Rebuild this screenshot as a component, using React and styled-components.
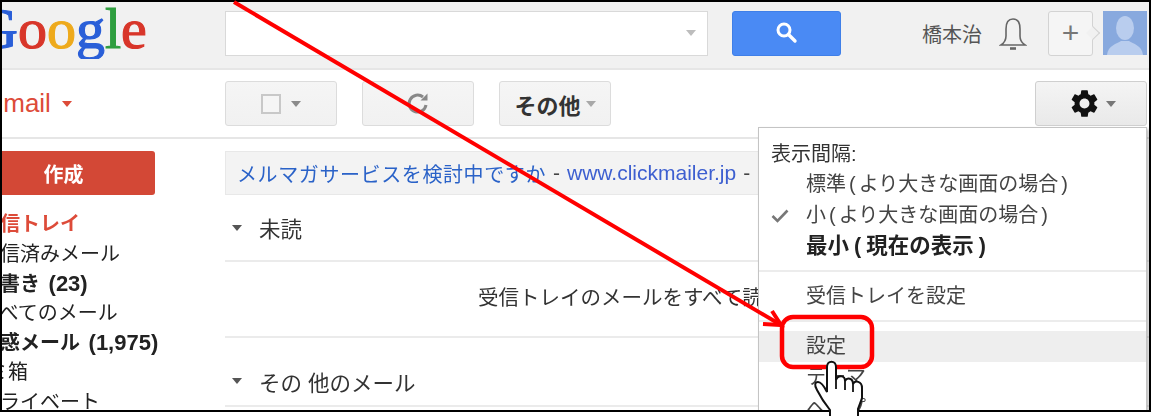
import styled, { createGlobalStyle } from "styled-components";
import { MdSettings } from "react-icons/md";

const GlobalStyle = createGlobalStyle`
  html, body {
    margin: 0;
    padding: 0;
    background: #fff;
  }
`;

const App = () => {
  return (
    <Stage>
      <GlobalStyle />
      <Frame>
        <Content>
          <TopBar>
            <LogoCell>
              <Logo>
                <LogoLetter color="#2a5fd8">G</LogoLetter>
                <LogoLetter color="#d8362a">o</LogoLetter>
                <LogoLetter color="#eeaa1c">o</LogoLetter>
                <LogoLetter color="#2a5fd8">g</LogoLetter>
                <LogoLetter color="#2f9e3f">l</LogoLetter>
                <LogoLetter color="#d8362a">e</LogoLetter>
              </Logo>
            </LogoCell>
            <SearchBox>
              <Caret color="#bdbdbd" />
            </SearchBox>
            <SearchButton>
              <svg width="26" height="26" viewBox="0 0 26 26" fill="none" stroke="#fff">
                <circle cx="10" cy="10" r="6" strokeWidth="3" />
                <path d="M14.5 14.5 L21 21" strokeWidth="3.4" strokeLinecap="round" />
              </svg>
            </SearchButton>
            <UserName>橋本治</UserName>
            <BellIcon viewBox="0 0 28 36" fill="none" stroke="#666" strokeWidth="1.6">
              <path d="M14 3 C8 3 7 8 7 13 V20 C7 24 5 27 2 29 H26 C23 27 21 24 21 20 V13 C21 8 20 3 14 3 Z" />
              <path d="M11 32.5 H17" strokeWidth="2.6" />
            </BellIcon>
            <PlusButton>+</PlusButton>
            <Avatar>
              <svg width="44" height="44" viewBox="0 0 44 44">
                <ellipse cx="22" cy="17" rx="9" ry="12" fill="#b9cdee" />
                <path d="M4 44 C5 34 14 33 18 30 H26 C30 33 39 34 40 44 Z" fill="#b9cdee" />
              </svg>
            </Avatar>
          </TopBar>

          <ToolRow>
            <GmailCell>
              <GmailLabel>Gmail</GmailLabel>
              <Caret color="#dd4b39" />
            </GmailCell>
            <ToolGroup>
              <ToolButton>
                <CheckBox />
                <Caret color="#8a8a8a" />
              </ToolButton>
              <ToolButton>
                <svg width="28" height="28" viewBox="0 0 28 28" fill="none" stroke="#888" strokeWidth="3">
                  <path d="M22 15 A8.5 8.5 0 1 1 19 7" />
                  <path d="M16.5 10.5 H23.5 V3.5 Z" fill="#888" stroke="none" />
                </svg>
              </ToolButton>
              <ToolButton bold>
                その他
                <Caret color="#a8a8a8" />
              </ToolButton>
            </ToolGroup>
            <GearButton>
              <MdSettings size={33} color="#111" />
              <Caret color="#777" />
            </GearButton>
          </ToolRow>

          <Body>
            <Sidebar>
              <ComposeButton>作成</ComposeButton>
              <NavList>
                <NavItem active>受信トレイ</NavItem>
                <NavItem>送信済みメール</NavItem>
                <NavItem bold>下書き <Count>(23)</Count></NavItem>
                <NavItem>すべてのメール</NavItem>
                <NavItem bold>迷惑メール <Count>(1,975)</Count></NavItem>
                <NavItem shift={12}>ゴミ箱</NavItem>
                <NavItem>プライベート</NavItem>
              </NavList>
            </Sidebar>
            <Main>
              <Banner>
                <BannerLink>メルマガサービスを検討中ですか</BannerLink>
                <Sep>-</Sep>
                <BannerUrl>www.clickmailer.jp</BannerUrl>
                <Sep>-</Sep>
              </Banner>
              <SectionHead height={67}>
                <SectionCaret />
                未読
              </SectionHead>
              <EmptyRow>受信トレイのメールをすべて読みました</EmptyRow>
              <SectionHead height={69} pushed>
                <SectionCaret />
                その 他のメール
              </SectionHead>
            </Main>
          </Body>

          <Menu>
            <MenuHeading>表示間隔:</MenuHeading>
            <MenuItem>標準<Paren>(</Paren>より大きな画面の場合<Paren>)</Paren></MenuItem>
            <MenuItem>
              <Check viewBox="0 0 18 14" fill="none" stroke="#777" strokeWidth="2.6">
                <path d="M1.5 7 L6.5 12 L16.5 1.5" />
              </Check>
              小<Paren>(</Paren>より大きな画面の場合<Paren>)</Paren>
            </MenuItem>
            <MenuItem bold>最小<BoldParen>(</BoldParen>現在の表示<BoldParen>)</BoldParen></MenuItem>
            <MenuRule />
            <MenuItem>受信トレイを設定</MenuItem>
            <MenuRule />
            <MenuItem hover>設定</MenuItem>
            <MenuItem>テーマ</MenuItem>
            <MenuItem>ヘルプ</MenuItem>
          </Menu>
        </Content>
      </Frame>

      <Annotation viewBox="0 0 1153 416">
        <path d="M234 2 L781 325" stroke="#f00" strokeWidth="4" fill="none" />
        <path d="M772 311 L781 325 L763 324" stroke="#f00" strokeWidth="4" fill="none" />
        <rect x="782" y="317" width="90" height="50" rx="11" stroke="#f00" strokeWidth="4.5" fill="none" />
        <path
          d="M830 416 V410 C826 405 820 396 817 390 C814 385 815 382 818 382 C822 382 825 388 827 392 L827 367 C827 360 836 360 836 367 L836 380 C838 375 845 375 845 381 C847 377 853 378 853 384 C855 380 862 381 862 388 L862 398 L858 409 V416"
          fill="#fff"
          stroke="#111"
          strokeWidth="2"
        />
        <path d="M836 380 V389 M845 381 V390 M853 384 V392" stroke="#111" strokeWidth="1.8" fill="none" />
      </Annotation>
    </Stage>
  );
};

export default App;

const cjk = `"Liberation Sans", "Noto Sans CJK JP", sans-serif`;

const Stage = styled.div`
  position: relative;
  width: 1153px;
  height: 416px;
  overflow: hidden;
  background: #fff;
  font-family: ${cjk};
`;

const Frame = styled.div`
  width: 1151px;
  height: 412px;
  box-sizing: border-box;
  border: 2px solid #000;
  overflow: hidden;
`;

const Content = styled.div`
  position: relative;
  height: 100%;
  filter: blur(0.35px);
`;

const Annotation = styled.svg`
  position: absolute;
  top: 0;
  left: 0;
  width: 1153px;
  height: 416px;
  pointer-events: none;
`;

const Caret = styled.span`
  display: inline-block;
  width: 0;
  height: 0;
  border-left: 5px solid transparent;
  border-right: 5px solid transparent;
  border-top: 6px solid ${(props) => props.color};
`;

const TopBar = styled.div`
  height: 68px;
  box-sizing: border-box;
  display: flex;
  align-items: center;
  background: #f1f1f1;
  border-bottom: 2px solid #e6e6e6;
  padding-bottom: 4px;
`;

const LogoCell = styled.div`
  width: 223px;
  flex: none;
  overflow: hidden;
`;

const Logo = styled.div`
  margin-left: -26px;
  margin-top: -8px;
  font-family: "Liberation Serif", serif;
  font-size: 58px;
  line-height: 60px;
  -webkit-text-stroke: 1.2px currentColor;
`;

const LogoLetter = styled.span`
  color: ${(props) => props.color};
`;

const SearchBox = styled.div`
  width: 483px;
  height: 45px;
  box-sizing: border-box;
  display: flex;
  align-items: center;
  justify-content: flex-end;
  padding-right: 11px;
  background: #fff;
  border: 1px solid #d9d9d9;
`;

const SearchButton = styled.div`
  width: 109px;
  height: 45px;
  margin-left: 24px;
  display: flex;
  align-items: center;
  justify-content: center;
  background: #4a8af4;
  border: 1px solid #3f7fe8;
  box-sizing: border-box;
  border-radius: 3px;
`;

const UserName = styled.div`
  margin-left: 81px;
  width: 60px;
  font-size: 20px;
  color: #555;
`;

const BellIcon = styled.svg`
  width: 28px;
  height: 36px;
  margin-left: 17px;
  margin-top: 2px;
`;

const PlusButton = styled.div`
  position: relative;
  width: 45px;
  height: 45px;
  margin-left: 21px;
  box-sizing: border-box;
  display: flex;
  align-items: center;
  justify-content: center;
  font-size: 30px;
  line-height: 1;
  color: #777;
  background: #f5f5f5;
  border: 1px solid #d3d3d3;
  border-radius: 3px;
  &::after {
    content: "";
    position: absolute;
    right: -6px;
    top: 16px;
    width: 9px;
    height: 9px;
    background: #f1f1f1;
    border-top: 1px solid #d3d3d3;
    border-right: 1px solid #d3d3d3;
    transform: rotate(45deg);
  }
`;

const Avatar = styled.div`
  width: 44px;
  height: 44px;
  margin-left: 10px;
  background: #88a9de;
  overflow: hidden;
  svg {
    display: block;
  }
`;

const ToolRow = styled.div`
  height: 69px;
  box-sizing: border-box;
  display: flex;
  align-items: center;
  background: #fff;
  border-bottom: 2px solid #e6e6e6;
`;

const GmailCell = styled.div`
  width: 223px;
  flex: none;
  display: flex;
  align-items: center;
  gap: 11px;
  overflow: hidden;
`;

const GmailLabel = styled.span`
  margin-left: -19px;
  font-size: 26px;
  color: #dd4b39;
`;

const ToolGroup = styled.div`
  display: flex;
  gap: 25px;
`;

const ToolButton = styled.div`
  width: 112px;
  height: 45px;
  box-sizing: border-box;
  display: flex;
  align-items: center;
  justify-content: center;
  gap: 5px;
  font-size: 22px;
  font-weight: ${(props) => (props.bold ? 700 : 400)};
  color: #333;
  background: linear-gradient(#f5f5f5, #f1f1f1);
  border: 1px solid #dcdcdc;
  border-radius: 3px;
`;

const CheckBox = styled.span`
  width: 20px;
  height: 20px;
  box-sizing: border-box;
  background: #f5f5f5;
  border: 2px solid #c8c8c8;
  margin-right: 5px;
`;

const GearButton = styled(ToolButton)`
  margin-left: auto;
  margin-right: 2px;
  padding-left: 2px;
  background: linear-gradient(#f4f4f4, #e9e9e9);
  border-color: #cfcfcf;
`;

const Body = styled.div`
  display: flex;
`;

const Sidebar = styled.div`
  width: 223px;
  flex: none;
  padding-top: 12px;
`;

const ComposeButton = styled.div`
  width: 183px;
  height: 44px;
  margin-left: -30px;
  display: flex;
  align-items: center;
  justify-content: center;
  font-size: 20px;
  font-weight: 700;
  color: #fff;
  background: #d34836;
  border-radius: 3px;
`;

const NavList = styled.div`
  margin-top: 15px;
`;

const NavItem = styled.div`
  height: 29.6px;
  line-height: 29.6px;
  white-space: nowrap;
  margin-left: ${(props) => -22 - (props.shift || 0)}px;
  font-size: 20px;
  font-weight: ${(props) => (props.bold || props.active ? 700 : 400)};
  color: ${(props) => (props.active ? "#dd4b39" : "#222")};
`;

const Count = styled.span`
  font-size: 22px;
  margin-left: 3px;
`;

const Main = styled.div`
  flex: 1;
  padding-top: 12px;
  min-width: 0;
`;

const Banner = styled.div`
  height: 44px;
  box-sizing: border-box;
  display: flex;
  align-items: center;
  gap: 7px;
  padding-left: 11px;
  white-space: nowrap;
  font-size: 21px;
  margin-right: 20px;
  background: #f3f3f3;
  border: 1px solid #e8e8e8;
`;

const BannerLink = styled.span`
  color: #2a62c8;
  font-size: 20px;
  letter-spacing: 0.6px;
`;

const BannerUrl = styled.span`
  color: #3d5fd0;
`;

const Sep = styled.span`
  color: #444;
`;

const SectionHead = styled.div`
  height: ${(props) => props.height}px;
  box-sizing: border-box;
  display: flex;
  align-items: center;
  gap: 17px;
  padding-left: 7px;
  padding-top: ${(props) => (props.pushed ? 19 : 0)}px;
  font-size: 21.5px;
  color: #333;
  border-bottom: 2px solid #ebebeb;
`;

const SectionCaret = styled.span`
  width: 0;
  height: 0;
  border-left: 5px solid transparent;
  border-right: 5px solid transparent;
  border-top: 6px solid #555;
`;

const EmptyRow = styled.div`
  height: 76px;
  box-sizing: border-box;
  display: flex;
  align-items: center;
  padding-left: 253px;
  padding-bottom: 6px;
  white-space: nowrap;
  font-size: 20.5px;
  color: #333;
  border-bottom: 2px solid #ebebeb;
`;

const Menu = styled.div`
  position: absolute;
  top: 125px;
  right: 2px;
  width: 389px;
  height: 300px;
  box-sizing: border-box;
  padding-top: 11px;
  background: #fff;
  border: 1px solid #c4c4c4;
  box-shadow: 2px 2px 3px rgba(0, 0, 0, 0.25);
`;

const MenuHeading = styled.div`
  height: 30px;
  line-height: 30px;
  padding-left: 12px;
  font-size: 20px;
  color: #333;
`;

const MenuItem = styled.div`
  position: relative;
  height: 31px;
  line-height: 31px;
  padding-left: 47px;
  white-space: nowrap;
  font-size: ${(props) => (props.bold ? 21.5 : 20)}px;
  font-weight: ${(props) => (props.bold ? 700 : 400)};
  color: ${(props) => (props.bold ? "#222" : "#444")};
  background: ${(props) => (props.hover ? "#eeeeee" : "transparent")};
`;

const Paren = styled.span`
  margin: 0 3px;
`;

const BoldParen = styled.span`
  margin: 0 5px;
`;

const Check = styled.svg`
  position: absolute;
  left: 12px;
  top: 9px;
  width: 18px;
  height: 14px;
`;

const MenuRule = styled.div`
  margin: 8px 0 9px;
  height: 2px;
  background: #ececec;
`;
